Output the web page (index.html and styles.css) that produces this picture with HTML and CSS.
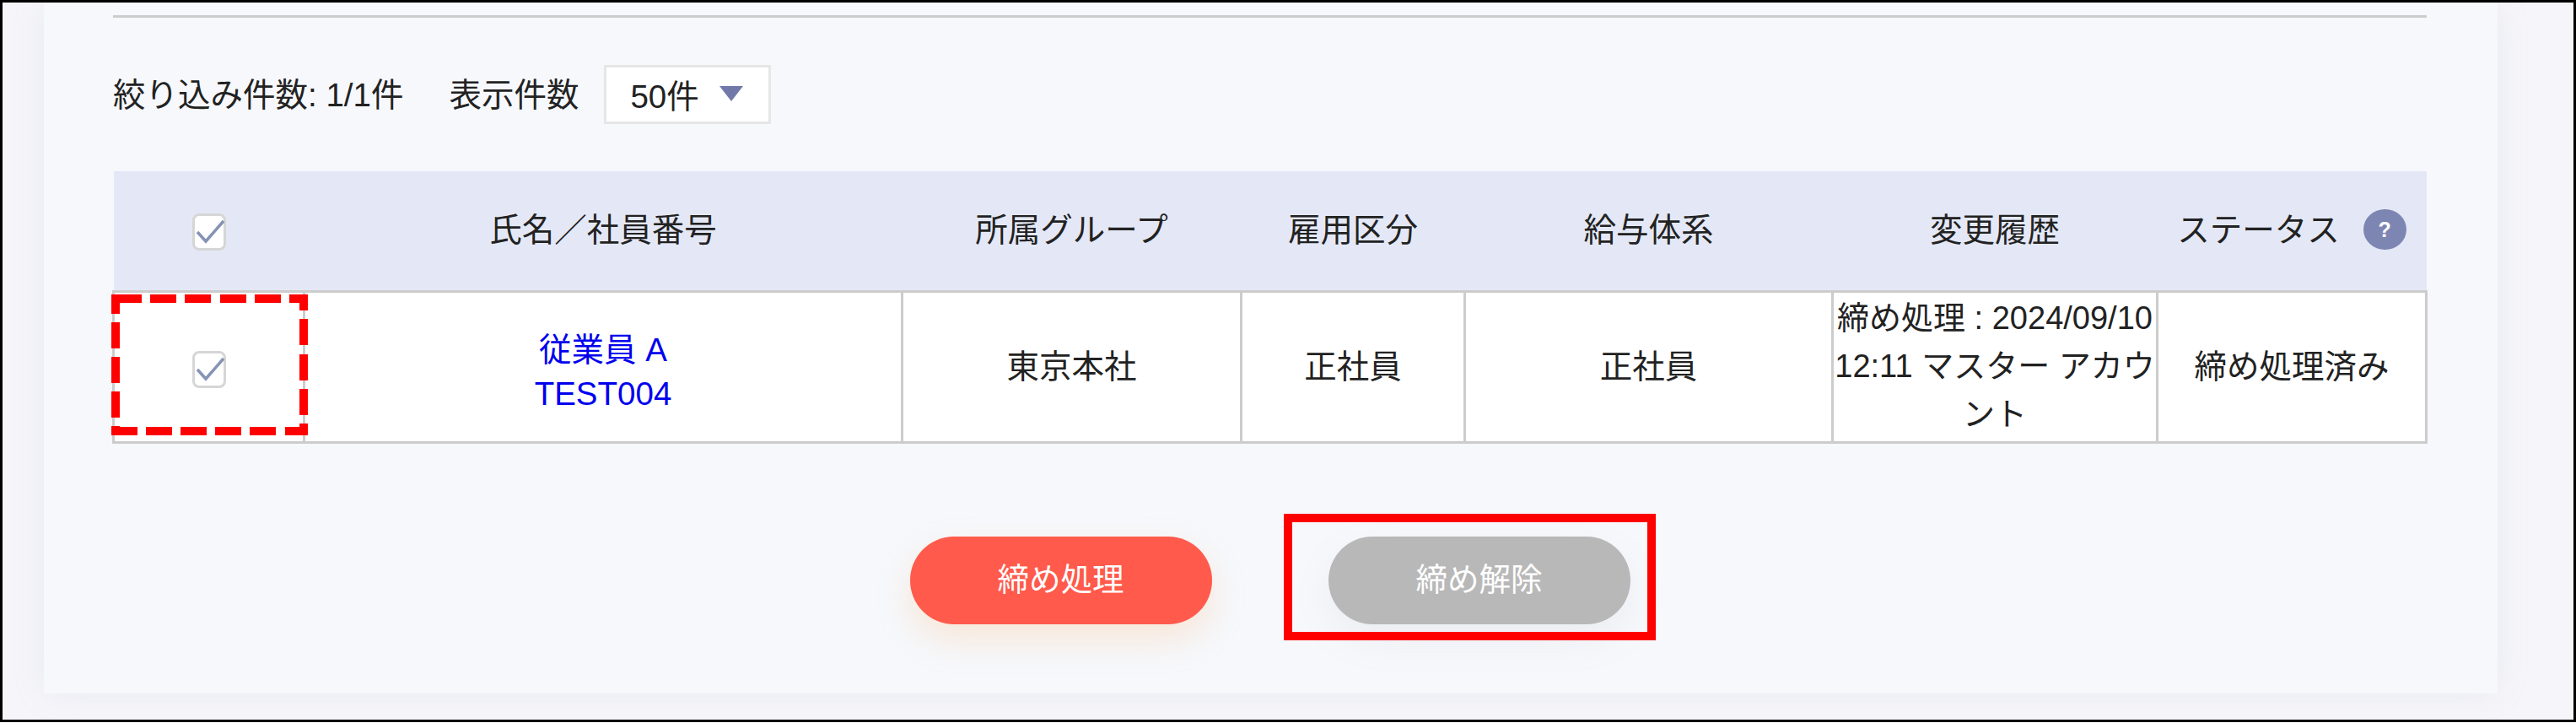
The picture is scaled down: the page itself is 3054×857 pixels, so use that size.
FILE: index.html
```html
<!DOCTYPE html>
<html lang="ja">
<head>
<meta charset="utf-8">
<title>締め処理</title>
<link rel="stylesheet" href="styles.css">
</head>
<body>
<div class="frame">
  <main class="panel">
    <hr class="rule">
    <div class="filters">
      <span class="count">絞り込み件数: 1/1件</span>
      <span class="per-page-label">表示件数</span>
      <div class="select"><span>50件</span><i class="caret"></i></div>
    </div>
    <div class="table-wrap">
      <table class="staff">
        <colgroup>
          <col class="c1"><col class="c2"><col class="c3"><col class="c4"><col class="c5"><col class="c6"><col class="c7">
        </colgroup>
        <thead>
          <tr>
            <th><span class="check check-head"><svg viewBox="0 0 40 44"><path d="M6 22L16 33L37 9"/></svg></span></th>
            <th>氏名／社員番号</th>
            <th>所属グループ</th>
            <th>雇用区分</th>
            <th>給与体系</th>
            <th>変更履歴</th>
            <th><div class="status-head">ステータス<span class="help">?</span></div></th>
          </tr>
        </thead>
        <tbody>
          <tr>
            <td><span class="check"><svg viewBox="0 0 40 44"><path d="M6 22L16 33L37 9"/></svg></span></td>
            <td class="name"><a href="#">従業員 A<br>TEST004</a></td>
            <td>東京本社</td>
            <td>正社員</td>
            <td>正社員</td>
            <td class="history">締め処理 : 2024/09/10 12:11 マスター アカウント</td>
            <td>締め処理済み</td>
          </tr>
        </tbody>
      </table>
      <svg class="dash-mark" viewBox="132 349 233 167">
        <path d="M132 349h36v10h-36zM178 349h31v10h-31zM219 349h31v10h-31zM261 349h31v10h-31zM302 349h31v10h-31zM343 349h22v10h-22z"/>
        <path d="M132 506h31v10h-31zM173 506h31v10h-31zM214 506h31v10h-31zM255 506h31v10h-31zM296 506h31v10h-31zM338 506h27v10h-27z"/>
        <path d="M132 349h10v23h-10zM132 382h10v31h-10zM132 423h10v31h-10zM132 464h10v31h-10zM132 505h10v11h-10z"/>
        <path d="M355 349h10v19h-10zM355 378h10v31h-10zM355 420h10v31h-10zM355 461h10v31h-10zM355 502h10v14h-10z"/>
      </svg>
    </div>
    <div class="actions">
      <button class="btn btn-close" type="button">締め処理</button>
      <div class="release-wrap">
        <button class="btn btn-release" type="button">締め解除</button>
        <div class="solid-mark"></div>
      </div>
    </div>
  </main>
</div>
</body>
</html>
```
FILE: styles.css
```css
* { box-sizing: border-box; }
html, body { margin: 0; padding: 0; }
body {
  width: 3054px;
  height: 857px;
  overflow: hidden;
  font-family: "Liberation Sans", "Noto Sans CJK JP", sans-serif;
  font-size: 38.5px;
  color: #222;
  background: #fff;
}
.frame {
  width: 3054px;
  height: 856px;
  border: 3px solid #000;
  background: #f6f6fa;
  padding-left: 49px;
  overflow: hidden;
}
.panel {
  width: 2909px;
  height: 819px;
  background: #f6f8fc;
  box-shadow: 0 0 40px rgba(110, 120, 170, 0.1);
  padding: 15px 84px 0 82px;
}
.rule {
  margin: 0;
  height: 3px;
  border: 0;
  background: #ccc;
}
.filters {
  display: flex;
  align-items: center;
  margin-top: 56px;
  height: 70px;
}
.count { margin-right: 54px; padding-bottom: 6px; }
.per-page-label { margin-right: 30px; padding-bottom: 6px; }
.select {
  width: 198px;
  height: 70px;
  background: #fff;
  border: 3px solid #e6e6e6;
  display: flex;
  align-items: center;
  padding: 0 0 2px 28px;
}
.caret {
  margin-left: 24px;
  width: 0;
  height: 0;
  border-left: 14px solid transparent;
  border-right: 14px solid transparent;
  border-top: 18px solid #7079a8;
}
.table-wrap {
  position: relative;
  margin-top: 56px;
}
.staff {
  width: 2742px;
  margin-left: -1px;
  table-layout: fixed;
  border-collapse: collapse;
}
.c1 { width: 226px; }
.c2 { width: 709px; }
.c3 { width: 402px; }
.c4 { width: 265px; }
.c5 { width: 436px; }
.c6 { width: 385px; }
.c7 { width: 319px; }
.staff th {
  height: 142px;
  padding: 0 0 8px;
  background: #e4e8f6;
  font-weight: 400;
  text-align: center;
}
.staff td {
  height: 179px;
  padding: 0;
  background: #fff;
  border: 3px solid #ccc;
  text-align: center;
  line-height: 57px;
}
.check {
  display: inline-block;
  width: 40px;
  height: 44px;
  background: #fff;
  border: 3px solid #d6d6d6;
  border-radius: 8px;
  vertical-align: middle;
  position: relative;
}
.check-head { top: 4px; }
.check svg {
  position: absolute;
  left: -3px;
  top: -3px;
  width: 40px;
  height: 44px;
}
.check path {
  fill: none;
  stroke: #8593b5;
  stroke-width: 3.5;
}
.name a {
  display: inline-block;
  padding-top: 14px;
  color: #0000ee;
  text-decoration: none;
  line-height: 52px;
}
.staff .history {
  font-size: 38px;
  word-break: break-all;
}
.status-head {
  display: flex;
  align-items: center;
  justify-content: center;
  gap: 28px;
}
.help {
  width: 51px;
  height: 48px;
  margin-top: 6px;
  border-radius: 50%;
  background: #7d86b3;
  color: #fff;
  font-size: 25px;
  font-weight: 700;
  line-height: 48px;
  text-align: center;
}
.dash-mark {
  position: absolute;
  left: -2px;
  top: 146px;
  width: 233px;
  height: 167px;
  fill: #f00;
}
.actions {
  display: flex;
  justify-content: center;
  gap: 138px;
  margin-top: 110px;
}
.btn {
  width: 358px;
  height: 104px;
  border: 0;
  border-radius: 52px;
  color: #fff;
  font: inherit;
  font-size: 37.5px;
  padding: 0 0 9px;
}
.btn-close {
  background: #ff5a4b;
  box-shadow: 0 18px 44px rgba(255, 160, 70, 0.2);
}
.btn-release {
  display: block;
  background: #b8b8b8;
  box-shadow: 0 18px 44px rgba(150, 150, 160, 0.1);
}
.release-wrap { position: relative; }
.solid-mark {
  position: absolute;
  left: -53px;
  right: -30px;
  top: -27px;
  bottom: -19px;
  border: 10px solid #f00;
}
```
